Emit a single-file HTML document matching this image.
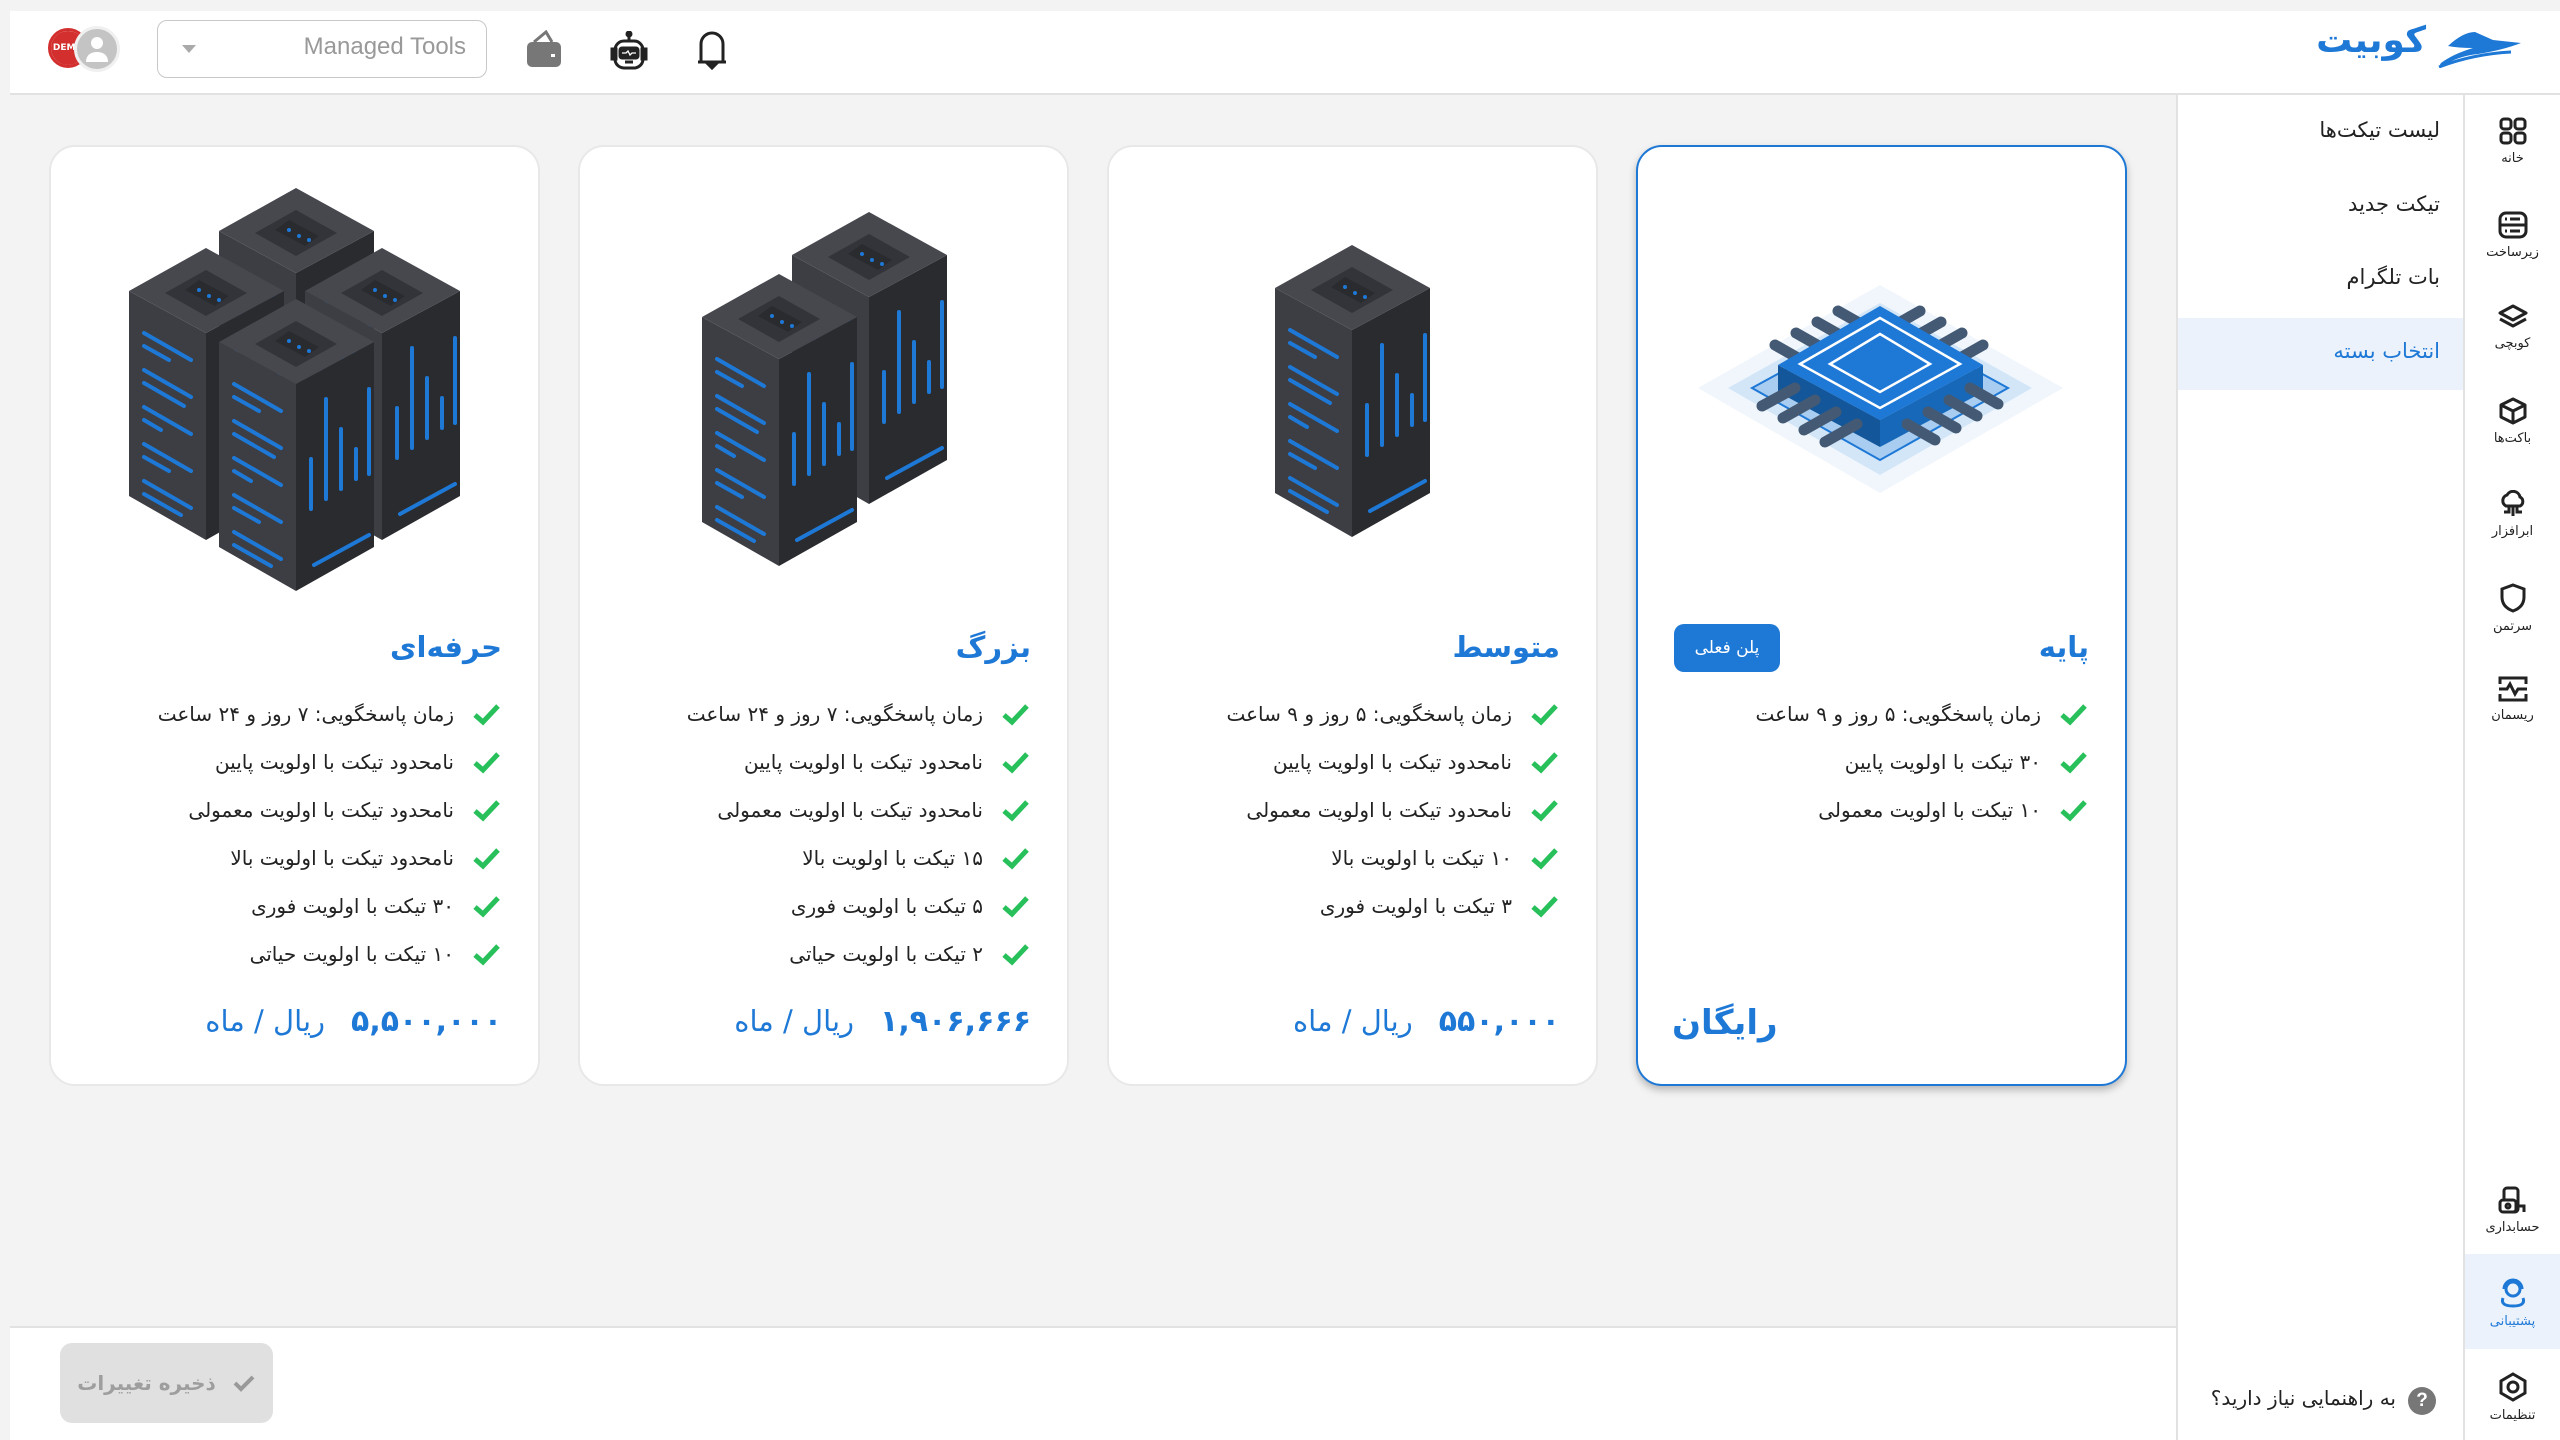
<!DOCTYPE html>
<html lang="fa"><head><meta charset="utf-8">
<style>
*{box-sizing:border-box;margin:0;padding:0}
body{width:2560px;height:1440px;overflow:hidden;background:#f3f3f3;font-family:"DejaVu Sans","Liberation Sans",sans-serif;position:relative;color:#222}
.abs{position:absolute}
.header{left:10px;top:11px;width:2550px;height:84px;background:#fff;border-bottom:2px solid #e2e2e2}
.rail{left:2463px;top:95px;width:97px;height:1345px;background:#fff;border-left:2px solid #e2e2e2}
.sub{left:2176px;top:95px;width:287px;height:1345px;background:#fff;border-left:2px solid #e2e2e2}
.bottom{left:10px;top:1326px;width:2166px;height:114px;background:#fff;border-top:2px solid #e2e2e2}
.card{background:#fff;border:2px solid #e8e8e8;border-radius:26px;width:491px;height:941px;top:145px;direction:rtl}
.card.active{border-color:#1e78d6;box-shadow:0 4px 8px rgba(0,0,0,.25)}
.title{position:absolute;right:36px;top:482px;font-size:29px;line-height:36px;font-weight:bold;color:#1e78d6}
.feat{position:absolute;right:38px;top:543px;font-size:20px;color:#222}
.feat div{height:48px;line-height:38px;display:flex;align-items:center;white-space:nowrap}
.feat svg{margin-left:18px;flex:none}
.price{position:absolute;right:36px;top:854px;line-height:40px;color:#1e78d6;font-size:30px;font-weight:bold;white-space:nowrap}
.price span{font-weight:normal;margin-right:26px;font-size:29px}
.mi{position:absolute;right:120px;font-size:21px;color:#222;direction:rtl}
.ri{position:absolute;left:2465px;width:95px;text-align:center;font-size:13px;color:#222}
.ri svg{display:block;margin:0 auto 6px}
</style></head><body>
<div class="abs header"></div>
<div class="abs sub"></div>
<div class="abs rail"></div>
<div class="abs bottom"></div>

<div class="abs" style="left:48px;top:28px;width:40px;height:40px;border-radius:50%;background:#fff;border:3px solid #d32f2f"></div>
<div class="abs" style="left:51px;top:31px;width:34px;height:34px;border-radius:50%;background:#d32f2f;color:#fff;font-size:9px;font-weight:bold;line-height:34px;text-align:center">DEMO</div>
<div class="abs" style="left:74px;top:26px;width:46px;height:46px;border-radius:50%;background:#c4c4c4;border:3px solid #f0f0f0"></div>
<svg class="abs" style="left:84px;top:34px" width="26" height="30" viewBox="0 0 26 30"><circle cx="13" cy="9" r="6" fill="#fff"/><path d="M2 28c0-7 5-10 11-10s11 3 11 10z" fill="#fff"/></svg>
<div class="abs" style="left:157px;top:20px;width:330px;height:58px;border:1.5px solid #c8c8c8;border-radius:10px"></div>
<div class="abs" style="left:182px;top:45px;width:0;height:0;border-left:7px solid transparent;border-right:7px solid transparent;border-top:8px solid #aaa"></div>
<div class="abs" style="left:290px;top:33px;width:176px;text-align:right;font-family:'Liberation Sans',sans-serif;font-size:24px;color:#999">Managed Tools</div>
<svg class="abs" style="left:526px;top:30px" width="36" height="38" viewBox="0 0 36 38"><path d="M8 12 L20 2 L26 12" fill="none" stroke="#777" stroke-width="3"/><rect x="1" y="12" width="34" height="25" rx="5" fill="#777"/><rect x="25" y="24" width="4" height="3" fill="#fff"/></svg>
<svg class="abs" style="left:609px;top:31px" width="40" height="40" viewBox="0 0 40 40" fill="none" stroke="#222" stroke-width="3"><circle cx="20" cy="3" r="2" fill="#222"/><path d="M20 5v5"/><rect x="6" y="10" width="28" height="27" rx="9"/><rect x="3" y="18" width="4" height="10" fill="#222"/><rect x="33" y="18" width="4" height="10" fill="#222"/><rect x="11" y="17" width="18" height="10" rx="2" fill="#222"/><path d="M13 22h4l2-2 2 4 2-2h4" stroke="#fff" stroke-width="1.3"/><path d="M16 31h8"/></svg>
<svg class="abs" style="left:696px;top:30px" width="32" height="40" viewBox="0 0 32 40" fill="none" stroke="#222" stroke-width="3"><path d="M5 32V14a11 11 0 0 1 22 0v18z"/><path d="M2 32h28"/><path d="M13 35h6l-3 3z" fill="#222"/></svg>

<div class="abs" style="right:134px;top:20px;font-size:36px;font-weight:bold;color:#1e78d6;direction:rtl">کوبیت</div>
<svg class="abs" style="left:2433px;top:30px" width="90" height="38" viewBox="0 0 90 38"><path d="M15 16 Q30 2 42 2 L60 10 L88 13 Q70 20 45 24 Q25 26 10 36 Q5 37 8 33 Q20 24 40 18 Q25 18 15 16z" fill="#1e78d6"/><path d="M6 37 Q40 24 78 22" fill="none" stroke="#1e78d6" stroke-width="3"/></svg>

<div class="abs" style="left:2178px;top:318px;width:285px;height:72px;background:#ebf2fb"></div>
<div class="mi" style="top:118px">لیست تیکت‌ها</div>
<div class="mi" style="top:192px">تیکت جدید</div>
<div class="mi" style="top:265px">بات تلگرام</div>
<div class="mi" style="top:339px;color:#1e78d6">انتخاب بسته</div>

<div class="ri" style="top:117px"><svg width="28" height="28" viewBox="0 0 28 28" fill="none" stroke="#222" stroke-width="3"><rect x="2" y="2" width="10" height="10" rx="3"/><rect x="16" y="2" width="10" height="10" rx="3"/><rect x="2" y="16" width="10" height="10" rx="3"/><rect x="16" y="16" width="10" height="10" rx="3"/></svg>خانه</div>
<div class="ri" style="top:211px"><svg width="30" height="28" viewBox="0 0 30 28" fill="none" stroke="#222" stroke-width="3"><rect x="2" y="2" width="26" height="24" rx="6"/><path d="M2 14h26M7 8h2M12 8h10M7 20h2M12 20h10"/></svg>زیرساخت</div>
<div class="ri" style="top:304px"><svg width="30" height="26" viewBox="0 0 30 26" fill="none" stroke="#222" stroke-width="3" stroke-linejoin="round"><path d="M15 2 L28 9 L15 16 L2 9z"/><path d="M2 15 L15 22 L28 15"/></svg>کوبچی</div>
<div class="ri" style="top:397px"><svg width="28" height="28" viewBox="0 0 28 28" fill="none" stroke="#222" stroke-width="3" stroke-linejoin="round"><path d="M14 2 L26 8 V20 L14 26 L2 20 V8z M2 8 L14 14 L26 8 M14 14 V26"/></svg>باکت‌ها</div>
<div class="ri" style="top:490px"><svg width="30" height="28" viewBox="0 0 30 28" fill="none" stroke="#222" stroke-width="3"><path d="M8 16 a6 6 0 0 1 1-11 a7 7 0 0 1 13 2 a5 5 0 0 1 0 9z"/><path d="M11 16v6H6M15 16v10M19 16v6h5"/></svg>ابرافزار</div>
<div class="ri" style="top:583px"><svg width="26" height="30" viewBox="0 0 26 30" fill="none" stroke="#222" stroke-width="3"><path d="M13 2 L24 6 V14 Q24 24 13 28 Q2 24 2 14 V6z"/></svg>سرتمن</div>
<div class="ri" style="top:676px"><svg width="30" height="26" viewBox="0 0 30 26" fill="none" stroke="#222" stroke-width="3"><path d="M2 8V2h26v6M2 18v6h26v-6"/><path d="M1 13h8l3-5 5 10 3-5h9"/></svg>ریسمان</div>
<div class="ri" style="top:1186px"><svg width="30" height="28" viewBox="0 0 30 28" fill="none" stroke="#222" stroke-width="3"><rect x="6" y="2" width="14" height="24" rx="3"/><rect x="2" y="14" width="16" height="12" rx="3" fill="#fff"/><circle cx="10" cy="20" r="2"/><path d="M20 20h6v6"/></svg>حسابداری</div>
<div class="abs" style="left:2465px;top:1254px;width:95px;height:95px;background:#ebf2fb"></div>
<div class="ri" style="top:1278px;color:#1e78d6"><svg width="30" height="30" viewBox="0 0 30 30" fill="none" stroke="#1e78d6" stroke-width="3"><circle cx="15" cy="11" r="7"/><path d="M6 11a9 9 0 0 1 18 0"/><path d="M5 20q-3 8 10 8t10-8"/></svg>پشتیبانی</div>
<div class="ri" style="top:1372px"><svg width="28" height="30" viewBox="0 0 28 30" fill="none" stroke="#222" stroke-width="3"><path d="M14 2 L26 9 V21 L14 28 L2 21 V9z"/><circle cx="14" cy="15" r="5"/></svg>تنظیمات</div>

<div class="abs" style="left:2408px;top:1387px;width:28px;height:28px;border-radius:50%;background:#777;color:#fff;font-weight:bold;font-size:19px;text-align:center;line-height:28px;font-family:'Liberation Sans',sans-serif">?</div>
<div class="abs" style="left:2100px;top:1386px;width:296px;text-align:right;direction:rtl;font-size:20px;color:#222">به راهنمایی نیاز دارید؟</div>

<div class="abs" style="left:60px;top:1343px;width:213px;height:80px;border-radius:12px;background:#e0e0e0;direction:rtl;color:#9e9e9e;font-size:20px;font-weight:bold;display:flex;align-items:center;justify-content:center;gap:16px"><svg width="24" height="20" viewBox="0 0 24 20"><path d="M3 10 L9 16 L21 4" fill="none" stroke="#999" stroke-width="4"/></svg>ذخیره تغییرات</div>

<div class="abs card" style="left:49px">
 <div class="title">حرفه‌ای</div>
 <div class="feat">
  <div><svg width="28" height="24" viewBox="0 0 28 24"><path d="M3 13 L11 20 L26 4" fill="none" stroke="#27c05a" stroke-width="5"/></svg>زمان پاسخگویی: ۷ روز و ۲۴ ساعت</div>
  <div><svg width="28" height="24" viewBox="0 0 28 24"><path d="M3 13 L11 20 L26 4" fill="none" stroke="#27c05a" stroke-width="5"/></svg>نامحدود تیکت با اولویت پایین</div>
  <div><svg width="28" height="24" viewBox="0 0 28 24"><path d="M3 13 L11 20 L26 4" fill="none" stroke="#27c05a" stroke-width="5"/></svg>نامحدود تیکت با اولویت معمولی</div>
  <div><svg width="28" height="24" viewBox="0 0 28 24"><path d="M3 13 L11 20 L26 4" fill="none" stroke="#27c05a" stroke-width="5"/></svg>نامحدود تیکت با اولویت بالا</div>
  <div><svg width="28" height="24" viewBox="0 0 28 24"><path d="M3 13 L11 20 L26 4" fill="none" stroke="#27c05a" stroke-width="5"/></svg>۳۰ تیکت با اولویت فوری</div>
  <div><svg width="28" height="24" viewBox="0 0 28 24"><path d="M3 13 L11 20 L26 4" fill="none" stroke="#27c05a" stroke-width="5"/></svg>۱۰ تیکت با اولویت حیاتی</div>
 </div>
 <div class="price">۵,۵۰۰,۰۰۰<span>ریال / ماه</span></div>
</div>
<div class="abs card" style="left:578px">
 <div class="title">بزرگ</div>
 <div class="feat">
  <div><svg width="28" height="24" viewBox="0 0 28 24"><path d="M3 13 L11 20 L26 4" fill="none" stroke="#27c05a" stroke-width="5"/></svg>زمان پاسخگویی: ۷ روز و ۲۴ ساعت</div>
  <div><svg width="28" height="24" viewBox="0 0 28 24"><path d="M3 13 L11 20 L26 4" fill="none" stroke="#27c05a" stroke-width="5"/></svg>نامحدود تیکت با اولویت پایین</div>
  <div><svg width="28" height="24" viewBox="0 0 28 24"><path d="M3 13 L11 20 L26 4" fill="none" stroke="#27c05a" stroke-width="5"/></svg>نامحدود تیکت با اولویت معمولی</div>
  <div><svg width="28" height="24" viewBox="0 0 28 24"><path d="M3 13 L11 20 L26 4" fill="none" stroke="#27c05a" stroke-width="5"/></svg>۱۵ تیکت با اولویت بالا</div>
  <div><svg width="28" height="24" viewBox="0 0 28 24"><path d="M3 13 L11 20 L26 4" fill="none" stroke="#27c05a" stroke-width="5"/></svg>۵ تیکت با اولویت فوری</div>
  <div><svg width="28" height="24" viewBox="0 0 28 24"><path d="M3 13 L11 20 L26 4" fill="none" stroke="#27c05a" stroke-width="5"/></svg>۲ تیکت با اولویت حیاتی</div>
 </div>
 <div class="price">۱,۹۰۶,۶۶۶<span>ریال / ماه</span></div>
</div>
<div class="abs card" style="left:1107px">
 <div class="title">متوسط</div>
 <div class="feat">
  <div><svg width="28" height="24" viewBox="0 0 28 24"><path d="M3 13 L11 20 L26 4" fill="none" stroke="#27c05a" stroke-width="5"/></svg>زمان پاسخگویی: ۵ روز و ۹ ساعت</div>
  <div><svg width="28" height="24" viewBox="0 0 28 24"><path d="M3 13 L11 20 L26 4" fill="none" stroke="#27c05a" stroke-width="5"/></svg>نامحدود تیکت با اولویت پایین</div>
  <div><svg width="28" height="24" viewBox="0 0 28 24"><path d="M3 13 L11 20 L26 4" fill="none" stroke="#27c05a" stroke-width="5"/></svg>نامحدود تیکت با اولویت معمولی</div>
  <div><svg width="28" height="24" viewBox="0 0 28 24"><path d="M3 13 L11 20 L26 4" fill="none" stroke="#27c05a" stroke-width="5"/></svg>۱۰ تیکت با اولویت بالا</div>
  <div><svg width="28" height="24" viewBox="0 0 28 24"><path d="M3 13 L11 20 L26 4" fill="none" stroke="#27c05a" stroke-width="5"/></svg>۳ تیکت با اولویت فوری</div>
 </div>
 <div class="price">۵۵۰,۰۰۰<span>ریال / ماه</span></div>
</div>
<div class="abs card active" style="left:1636px">
 <div class="title">پایه</div>
 <div class="abs" style="left:36px;top:477px;width:106px;height:48px;border-radius:10px;background:#1e78d6;color:#fff;font-size:17px;text-align:center;line-height:48px">پلن فعلی</div>
 <div class="feat">
  <div><svg width="28" height="24" viewBox="0 0 28 24"><path d="M3 13 L11 20 L26 4" fill="none" stroke="#27c05a" stroke-width="5"/></svg>زمان پاسخگویی: ۵ روز و ۹ ساعت</div>
  <div><svg width="28" height="24" viewBox="0 0 28 24"><path d="M3 13 L11 20 L26 4" fill="none" stroke="#27c05a" stroke-width="5"/></svg>۳۰ تیکت با اولویت پایین</div>
  <div><svg width="28" height="24" viewBox="0 0 28 24"><path d="M3 13 L11 20 L26 4" fill="none" stroke="#27c05a" stroke-width="5"/></svg>۱۰ تیکت با اولویت معمولی</div>
 </div>
 <div class="abs" style="left:34px;top:854px;line-height:44px;color:#1e78d6;font-size:34px;font-weight:bold">رایگان</div>
</div>

<svg class="abs" style="left:0;top:0" width="2560" height="1440" viewBox="0 0 2560 1440">
<defs>
<symbol id="tw" viewBox="0 0 155 292" overflow="visible">
 <polygon points="0,43 77,85 77,292 0,248" fill="#3d3e44"/>
 <polygon points="77,85 155,43 155,248 77,292" fill="#2a2b2f"/>
 <polygon points="77,0 155,43 77,85 0,43" fill="#47484e"/>
 <polygon points="77,22 118,45 77,68 36,45" fill="#333439"/>
 <polygon points="70,32 100,48 86,58 56,42" fill="#2a2b2f"/>
 <g stroke="#1e78d6" stroke-width="4" stroke-linecap="round">
  <path d="M15 85 L62 112 M15 98 L40 112"/>
  <path d="M15 122 L62 149 M15 135 L55 158"/>
  <path d="M15 159 L62 186 M15 172 L32 182"/>
  <path d="M15 196 L62 223 M15 209 L40 223"/>
  <path d="M15 233 L62 260 M15 246 L52 267"/>
  <path d="M92 210 V160 M107 200 V100 M122 190 V130 M137 180 V150 M150 175 V90"/>
  <path d="M95 266 L150 236"/>
 </g>
 <g fill="#1e78d6"><circle cx="70" cy="42" r="2"/><circle cx="80" cy="48" r="2"/><circle cx="90" cy="52" r="2"/></g>
</symbol>
</defs>
<use href="#tw" x="219" y="188" width="155" height="292"/>
<use href="#tw" x="129" y="248" width="155" height="292"/>
<use href="#tw" x="305" y="248" width="155" height="292"/>
<use href="#tw" x="219" y="299" width="155" height="292"/>
<use href="#tw" x="792" y="212" width="155" height="292"/>
<use href="#tw" x="702" y="274" width="155" height="292"/>
<use href="#tw" x="1275" y="245" width="155" height="292"/>
<polygon points="1880,285 2063,388 1880,493 1698,388" fill="#f0f6fc"/>
<polygon points="1880,303 2032,388 1880,475 1728,388" fill="#d3e6f8"/>
<polygon points="1880,318 2008,388 1880,460 1752,388" fill="#a9cdf0" stroke="#1e78d6" stroke-width="2"/>
<g stroke="#445a74" stroke-width="11" stroke-linecap="round">
<path d="M1775 345 L1805 362 M1796 333 L1826 350 M1817 322 L1847 339 M1838 311 L1868 328"/>
<path d="M1920 311 L1890 328 M1941 322 L1911 339 M1962 333 L1932 350 M1983 345 L1953 362"/>
</g>
<polygon points="1778,365 1880,420 1880,447 1778,392" fill="#135699"/>
<polygon points="1880,420 1983,365 1983,392 1880,447" fill="#1768b8"/>
<polygon points="1880,306 1983,365 1880,420 1778,365" fill="#1e78d6"/>
<polygon points="1880,318 1960,364 1880,408 1800,364" fill="none" stroke="#fff" stroke-width="2.5"/>
<polygon points="1880,334 1930,364 1880,392 1830,364" fill="none" stroke="#fff" stroke-width="2.5"/>
<g stroke="#445a74" stroke-width="11" stroke-linecap="round">
<path d="M1762 406 L1795 388 M1783 418 L1815 400 M1804 430 L1836 412 M1825 442 L1857 424"/>
<path d="M1907 424 L1935 440 M1928 412 L1956 428 M1949 400 L1977 416 M1970 388 L1998 404"/>
</g>
</svg>
</body></html>
